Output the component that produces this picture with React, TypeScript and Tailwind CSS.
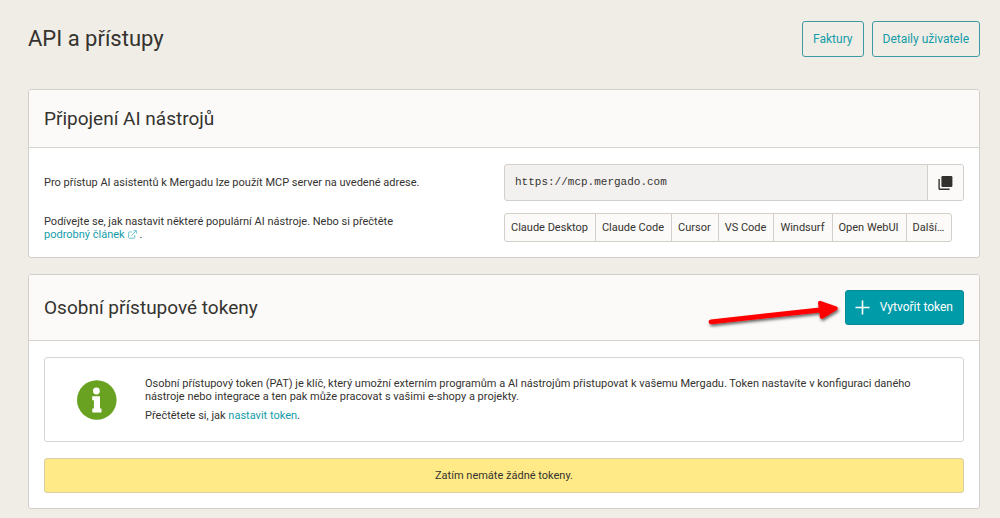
import type { ReactNode } from "react";

const tools = ["Claude Desktop", "Claude Code", "Cursor", "VS Code", "Windsurf", "Open WebUI", "Další…"];

function Panel({ title, action, children }: { title: string; action?: ReactNode; children: ReactNode }) {
  return (
    <section className="overflow-hidden rounded-[3px] border border-[#d3d0cc] bg-white">
      <header className="flex items-center justify-between border-b border-[#d8d5d1] bg-[#fbfaf8] px-[15px] py-[15px]">
        <h2 className="text-[19px] leading-[27px]">{title}</h2>
        {action}
      </header>
      <div className="px-[15px] pb-[15px] pt-4">{children}</div>
    </section>
  );
}

function OutlineLink({ children }: { children: ReactNode }) {
  return (
    <a
      href="#"
      className="flex h-9 items-center rounded-[3px] border border-[#3c9ba2] px-[10px] text-[12px] text-[#139ca8]"
    >
      {children}
    </a>
  );
}

function CopyIcon() {
  return (
    <svg viewBox="0 0 16 16" className="size-4" aria-hidden="true">
      <rect x="3.4" y="1" width="11" height="11" rx="1.3" fill="#32312e" />
      <path d="M1.1 4v9.2a1 1 0 0 0 1 1H11.6" fill="none" stroke="#32312e" strokeWidth="1.4" />
    </svg>
  );
}

function ExternalIcon() {
  return (
    <svg viewBox="0 0 9 9" className="ml-[3px] inline size-[9px]" fill="none" stroke="#6fc4cb" strokeWidth="1" aria-hidden="true">
      <path d="M4 2H1.2a.6.6 0 0 0-.6.6v5a.6.6 0 0 0 .6.6h5a.6.6 0 0 0 .6-.6V5" />
      <path d="M3.4 5.5 8.2.8M5.4.6h3v3" />
    </svg>
  );
}

function InfoIcon() {
  return (
    <svg viewBox="0 0 40 40" className="size-10 shrink-0" aria-hidden="true">
      <circle cx="19.8" cy="20" r="19.8" fill="#68a220" />
      <circle cx="19.4" cy="11" r="3.4" fill="#fff" />
      <path d="M15.2 16.3h7.8v12.2h1.5v4.1h-9.2v-4.1h1.6v-8.2h-1.7z" fill="#fff" />
    </svg>
  );
}

function Arrow() {
  return (
    <svg
      viewBox="0 0 136 36"
      className="pointer-events-none absolute right-full top-1/2 mr-1 h-9 w-[136px] -translate-y-1/2 overflow-visible"
      aria-hidden="true"
    >
      <defs>
        <filter id="arrow-shadow" x="-10%" y="-30%" width="120%" height="180%">
          <feDropShadow dx="1" dy="2" stdDeviation="1.5" floodColor="#000" floodOpacity="0.6" />
        </filter>
      </defs>
      <g filter="url(#arrow-shadow)" fill="#fe0000" stroke="#fe0000" strokeLinecap="round" strokeLinejoin="round">
        <path d="M6 31.8 115 20" strokeWidth="4.8" />
        <path d="m115 12.8 15.8 5.6-14 8.4z" strokeWidth="4" />
      </g>
    </svg>
  );
}

export default function App() {
  return (
    <main className="min-h-screen bg-[#f0ede6] pb-2 pl-7 pr-5 pt-[21px] font-['Roboto',sans-serif] text-[11px] leading-[13px] text-[#35332f]">
      <div className="mb-8 flex items-center justify-between">
        <h1 className="text-[22px] leading-9">API a přístupy</h1>
        <nav className="flex gap-2">
          <OutlineLink>Faktury</OutlineLink>
          <OutlineLink>Detaily uživatele</OutlineLink>
        </nav>
      </div>

      <div className="flex flex-col gap-4">
        <Panel title="Připojení AI nástrojů">
          <div className="grid grid-cols-2 items-center gap-y-3">
            <label htmlFor="mcp-url">Pro přístup AI asistentů k Mergadu lze použít MCP server na uvedené adrese.</label>
            <div className="flex h-[37px] rounded-[3px] border border-[#d3cfcb] bg-[#f3f1ef]">
              <input
                id="mcp-url"
                readOnly
                value="https://mcp.mergado.com"
                className="min-w-0 flex-1 bg-transparent px-[10px] font-['Liberation_Mono',monospace] text-[11px] outline-none"
              />
              <button
                type="button"
                aria-label="Kopírovat"
                className="flex w-9 items-center justify-center rounded-r-[2px] border-l border-[#d3cfcb] bg-[#fbfaf8]"
              >
                <CopyIcon />
              </button>
            </div>
            <p>
              Podívejte se, jak nastavit některé populární AI nástroje. Nebo si přečtěte
              <br />
              <a href="#" className="text-[#139ca8]">
                podrobný článek
                <ExternalIcon />
              </a>{" "}
              .
            </p>
            <div className="flex">
              {tools.map((tool) => (
                <button
                  key={tool}
                  type="button"
                  className="-ml-px h-[29px] whitespace-nowrap border border-[#d3cfcb] bg-[#fbfaf8] pl-[6px] pr-[7px] text-[11px] first:ml-0 first:rounded-l-[3px] last:rounded-r-[3px]"
                >
                  {tool}
                </button>
              ))}
            </div>
          </div>
        </Panel>

        <Panel
          title="Osobní přístupové tokeny"
          action={
            <div className="relative">
              <button
                type="button"
                className="flex h-[35px] items-center gap-[9px] rounded-[3px] border border-[#078b96] bg-[#009ba8] pl-[9px] pr-[10px] text-[12px] text-white"
              >
                <svg viewBox="0 0 16 16" className="size-4" stroke="#fff" strokeWidth="1.6" aria-hidden="true">
                  <path d="M7.5 .5v14M.5 7.5h14" />
                </svg>
                Vytvořit token
              </button>
              <Arrow />
            </div>
          }
        >
          <div className="flex flex-col gap-4">
            <div className="flex h-[85px] items-center gap-7 rounded-[3px] border border-[#d5d5d3] px-8">
              <InfoIcon />
              <div className="flex flex-col gap-[6px]">
                <p>
                  Osobní přístupový token (PAT) je klíč, který umožní externím programům a AI nástrojům přistupovat k
                  vašemu Mergadu. Token nastavíte v konfiguraci daného nástroje nebo integrace a ten pak může pracovat s
                  vašimi e-shopy a projekty.
                </p>
                <p>
                  Přečtětete si, jak{" "}
                  <a href="#" className="text-[#139ca8]">
                    nastavit token
                  </a>
                  .
                </p>
              </div>
            </div>
            <p className="rounded-[3px] border border-[#d8cfa5] bg-[#ffea87] py-[10px] text-center">
              Zatím nemáte žádné tokeny.
            </p>
          </div>
        </Panel>
      </div>
    </main>
  );
}
